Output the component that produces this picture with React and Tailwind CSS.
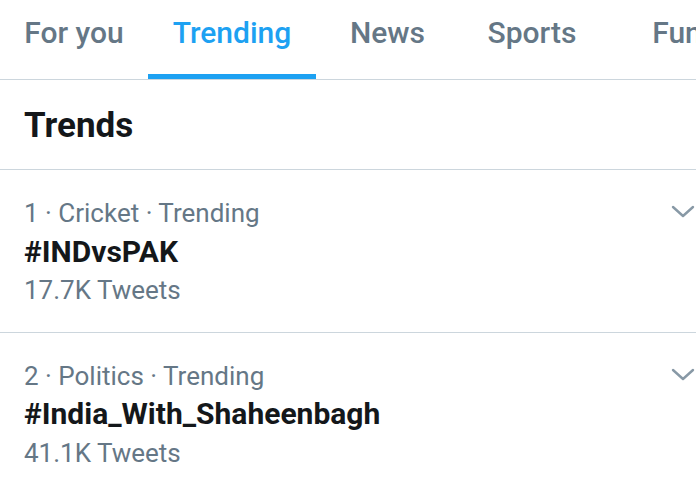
const tabs = [
  { label: "For you", w: "w-[148px]" },
  { label: "Trending", w: "w-[168px]", active: true },
  { label: "News", w: "w-[143px]" },
  { label: "Sports", w: "w-[146px]" },
  { label: "Fun", w: "w-[144px]" },
];

const trends = [
  { meta: "1 · Cricket · Trending", tag: "#INDvsPAK", count: "17.7K Tweets" },
  { meta: "2 · Politics · Trending", tag: "#India_With_Shaheenbagh", count: "41.1K Tweets" },
];

const Chevron = () => (
  <svg width="24" height="14" viewBox="0 0 24 14" fill="none" className="text-[#8899a6]">
    <path d="M2 2l10 9 10-9" stroke="currentColor" strokeWidth="2.4" strokeLinecap="round" strokeLinejoin="round" />
  </svg>
);

const App = () => {
  return (
    <div className="w-[696px] h-[492px] overflow-hidden bg-white font-['Roboto',sans-serif]">
      <nav className="flex h-[80px] border-b border-[#ccd6dd] overflow-hidden">
        {tabs.map((tab) => (
          <div key={tab.label} className={`${tab.w} shrink-0 flex flex-col`}>
            <div
              className={`flex-1 flex items-center justify-center text-[30px] font-medium whitespace-nowrap ${
                tab.active ? "text-[#1da1f2]" : "text-[#657786]"
              }`}
            >
              <span className="-mt-[10px]">{tab.label}</span>
            </div>
            <div className={`h-[5px] ${tab.active ? "bg-[#1da1f2]" : ""}`} />
          </div>
        ))}
      </nav>

      <section className="h-[90px] flex items-center px-6 border-b border-[#ccd6dd]">
        <h1 className="text-[35px] font-bold text-[#14171a] mt-[3px]">Trends</h1>
      </section>

      {trends.map((t) => (
        <div key={t.tag} className="flex justify-between pl-6 pt-[24px] pb-[22px] border-b border-[#ccd6dd]">
          <div className="leading-[38.5px]">
            <p className="text-[26px] text-[#657786]">{t.meta}</p>
            <p className="text-[30px] font-bold text-[#14171a]">{t.tag}</p>
            <p className="text-[26px] text-[#657786]">{t.count}</p>
          </div>
          <div className="pt-[11px] mr-[1px]">
            <Chevron />
          </div>
        </div>
      ))}
    </div>
  );
};

export default App;
